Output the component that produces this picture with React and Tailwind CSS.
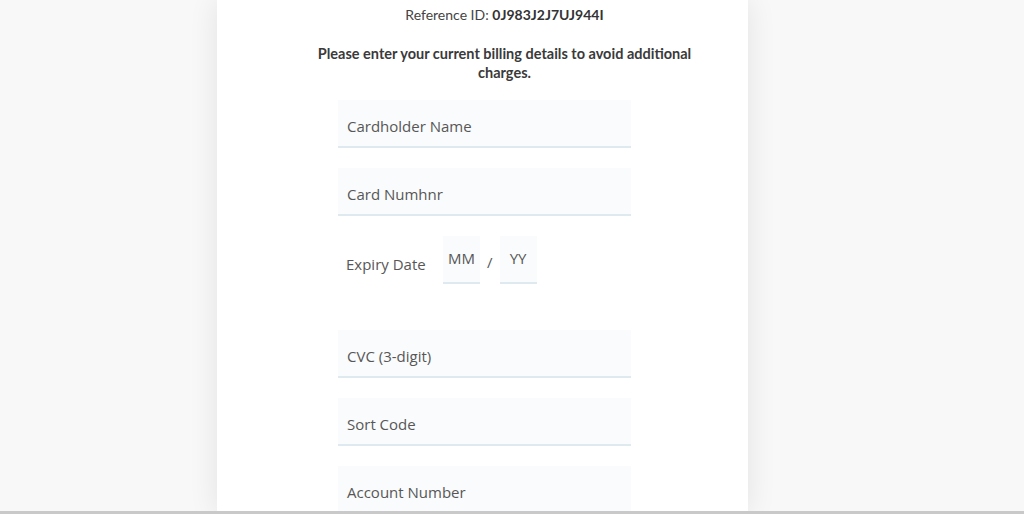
import React from "react";

const fieldFont = { fontFamily: "'Open Sans', Lato, sans-serif" };

const Field = ({ label }) => (
  <div
    className="w-[293px] h-[48px] bg-[#fafbfc] border-b-2 border-[#dfe9f0] flex items-center pl-[9px] pt-[6px] text-[15px] text-[#575757]"
    style={fieldFont}
  >
    {label}
  </div>
);

const SmallBox = ({ label }) => (
  <div
    className="w-[37px] h-[48px] bg-[#fafbfc] border-b-2 border-[#dfe9f0] flex items-center justify-center text-[15px] text-[#575757]"
    style={fieldFont}
  >
    {label}
  </div>
);

export default function App() {
  return (
    <div
      className="relative w-[1024px] h-[514px] overflow-hidden bg-[#f8f8f8] flex"
      style={{ fontFamily: "Lato, 'Open Sans', sans-serif" }}
    >
      <div className="ml-[217px] w-[531px] h-full bg-white shadow-[0_0_28px_rgba(0,0,0,0.09)] flex flex-col">
        <div className="ml-[22px] w-[531px] flex flex-col items-center">
          <p className="mt-[5px] text-[14px] leading-[19px] text-[#444]">
            Reference ID: <span className="font-bold text-[#333]">0J983J2J7UJ944I</span>
          </p>
          <p className="mt-[20px] w-[400px] text-center text-[14.5px] leading-[19px] font-bold text-[#3a3a3a]">
            Please enter your current billing details to avoid additional charges.
          </p>
        </div>
        <div className="ml-[121px] mt-[18px] flex flex-col gap-[20px]">
          <Field label="Cardholder Name" />
          <Field label="Card Numhnr" />
          <div className="flex items-center h-[47px] mb-[27px]">
            <span className="ml-[8px] mt-[9px] text-[15px] text-[#575757] w-[97px]" style={fieldFont}>
              Expiry Date
            </span>
            <SmallBox label="MM" />
            <span className="mx-[7px] mt-[6px] text-[15px] text-[#575757]" style={fieldFont}>/</span>
            <SmallBox label="YY" />
          </div>
          <Field label="CVC (3-digit)" />
          <Field label="Sort Code" />
          <Field label="Account Number" />
        </div>
      </div>
      <div className="absolute left-0 bottom-0 w-full h-[3px] bg-[#c9c9c9]" />
    </div>
  );
}
